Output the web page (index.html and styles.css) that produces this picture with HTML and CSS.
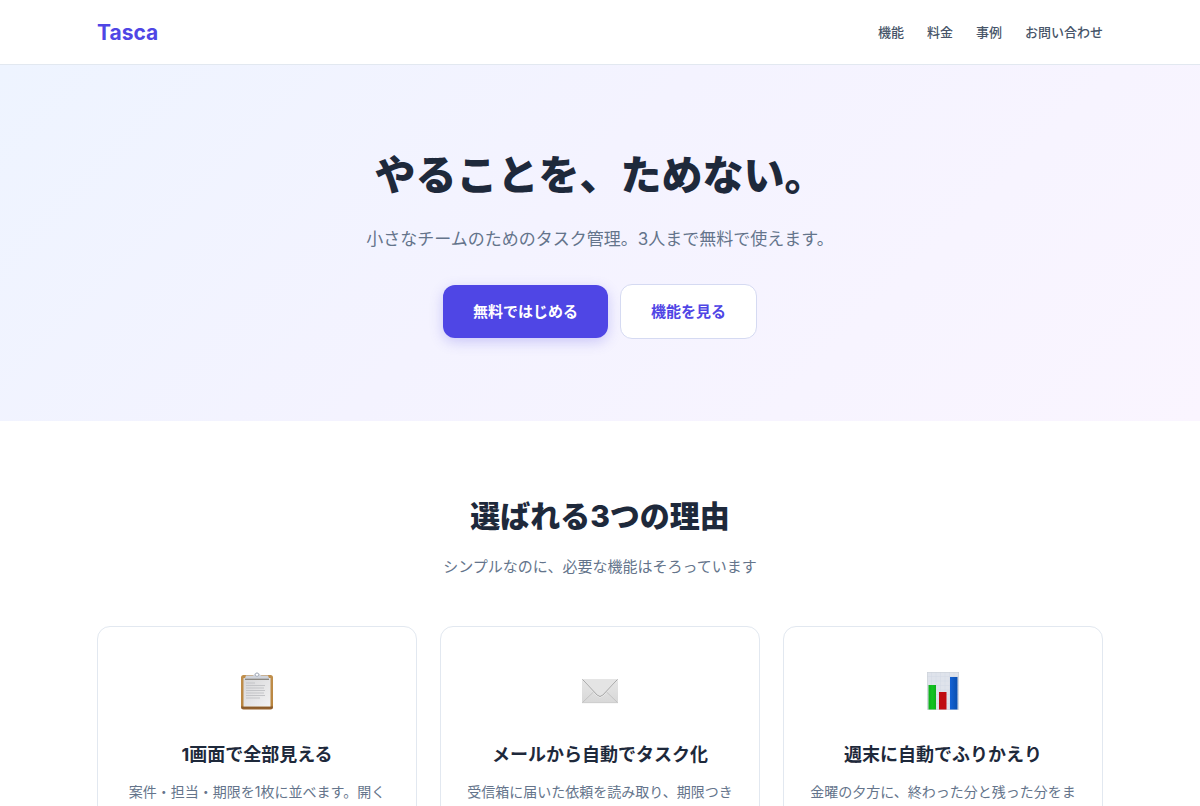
FILE: index.html
```html
<!DOCTYPE html>
<html lang="ja">
<head>
  <meta charset="UTF-8" />
  <meta name="viewport" content="width=device-width, initial-scale=1.0"/>
  <title>Tasca</title>
  <link rel="stylesheet" href="styles.css">
</head>
<body>
  <header class="header">
    <div class="container header-inner">
      <a href="#" class="logo">Tasca</a>
      <nav class="nav">
        <a href="#features">機能</a>
        <a href="#price">料金</a>
        <a href="#cases">事例</a>
        <a href="#contact">お問い合わせ</a>
      </nav>
    </div>
  </header>

  <main>
    <section class="hero">
      <div class="container">
        <h1>やることを、ためない。</h1>
        <p class="hero-lead">小さなチームのためのタスク管理。3人まで無料で使えます。</p>
        <div class="hero-buttons">
          <a href="#start" class="btn btn-primary">無料ではじめる</a>
          <a href="#features" class="btn btn-outline">機能を見る</a>
        </div>
      </div>
    </section>

    <section class="features" id="features">
      <div class="container">
        <h2>選ばれる3つの理由</h2>
        <p class="features-lead">シンプルなのに、必要な機能はそろっています</p>

        <div class="cards">
          <div class="card">
            <!-- clipboard -->
            <svg class="card-icon" viewBox="0 0 38 38" aria-hidden="true">
              <defs>
                <linearGradient id="board" x1="0" y1="0" x2="0" y2="1">
                  <stop offset="0" stop-color="#c08f4c"/>
                  <stop offset="0.88" stop-color="#b9853f"/>
                  <stop offset="0.94" stop-color="#8a5a2a"/>
                  <stop offset="1" stop-color="#9a6630"/>
                </linearGradient>
                <linearGradient id="paper" x1="0" y1="0" x2="1" y2="1">
                  <stop offset="0" stop-color="#d6d6d8"/>
                  <stop offset="1" stop-color="#f2f2f3"/>
                </linearGradient>
              </defs>
              <rect x="3" y="3" width="32" height="34.5" rx="2.5" fill="url(#board)"/>
              <rect x="5.5" y="6" width="27" height="28.5" fill="url(#paper)"/>
              <path d="M8 11h9M8 13.5h19M8 16h18M8 18.5h19M8 21h18M8 23.5h19M8 26h14" stroke="#c3c4c7" stroke-width="1"/>
              <path d="M8 3.5h6.5c1.5 0 2-3 4.5-3s3 3 4.5 3H30l1.5 4h-25z" fill="#cfd3db"/>
              <path d="M7 7.3h24" stroke="#858078" stroke-width="1.2"/>
              <circle cx="19" cy="2.7" r="1.7" fill="#fff" stroke="#a9b0bd" stroke-width="1"/>
            </svg>
            <h3>1画面で全部見える</h3>
            <p>案件・担当・期限を1枚に並べます。開く</p>
          </div>

          <div class="card">
            <!-- envelope -->
            <svg class="card-icon" viewBox="0 0 38 38" aria-hidden="true">
              <defs>
                <linearGradient id="envelope" x1="0" y1="0" x2="0" y2="1">
                  <stop offset="0" stop-color="#e6e6e6"/>
                  <stop offset="1" stop-color="#d8d8d8"/>
                </linearGradient>
              </defs>
              <rect x="1" y="7" width="36" height="24" rx="0.5" fill="url(#envelope)"/>
              <path d="M1.5 30.5l12.500-12M36.5 30.5L24 18.5" fill="none" stroke="#bdbdbd" stroke-width="0.8"/>
              <path d="M1.5 8.2L16.5 24q2.5 2.2 5 0L36.5 8.2" fill="none" stroke="#f7f7f7" stroke-width="1"/>
              <path d="M1.5 7.5L16.3 23.2q2.7 2.6 5.4 0L36.5 7.5" fill="#e4e4e4" stroke="#a3a3a3" stroke-width="1"/>
              <path d="M1 30.7h36" stroke="#c6c6c6" stroke-width="0.6"/>
            </svg>
            <h3>メールから自動でタスク化</h3>
            <p>受信箱に届いた依頼を読み取り、期限つき</p>
          </div>

          <div class="card">
            <!-- bar chart -->
            <svg class="card-icon" viewBox="0 0 38 38" aria-hidden="true">
              <defs>
                <linearGradient id="bar-green" x1="0" y1="0" x2="1" y2="0">
                  <stop offset="0" stop-color="#0fae1c"/>
                  <stop offset="0.5" stop-color="#12c420"/>
                  <stop offset="1" stop-color="#0fae1c"/>
                </linearGradient>
                <linearGradient id="bar-blue" x1="0" y1="0" x2="1" y2="0">
                  <stop offset="0" stop-color="#1463d6"/>
                  <stop offset="1" stop-color="#0b4fae"/>
                </linearGradient>
              </defs>
              <rect x="3" y="0" width="32" height="37.5" fill="#dfe3eb"/>
              <path d="M3 4.5h32M3 9h32M3 13.5h32M3 18h32M3 22.5h32M3 27h32M3 31.5h32M7.5 0v37.5M12 0v37.5M16.5 0v37.5M21 0v37.5M25.5 0v37.5M30 0v37.5" stroke="#d3d9e4" stroke-width="0.5"/>
              <rect x="3.3" y="0.3" width="31.4" height="37" fill="none" stroke="#ccd0d8" stroke-width="0.6"/>
              <rect x="4.5" y="13" width="7.5" height="24.5" fill="url(#bar-green)"/>
              <rect x="15" y="20" width="7.5" height="17.5" fill="#c00d12"/>
              <rect x="26" y="5" width="7.5" height="32.5" fill="url(#bar-blue)"/>
            </svg>
            <h3>週末に自動でふりかえり</h3>
            <p>金曜の夕方に、終わった分と残った分をま</p>
          </div>
        </div>
      </div>
    </section>
  </main>
</body>
</html>
```

FILE: styles.css
```css
* { box-sizing: border-box; }

body {
  margin: 0;
  font-family: Inter, 'Noto Sans CJK JP', sans-serif;
  color: #1e293b;
  background: #fff;
}

h1, h2, h3, p { margin: 0; }

a { text-decoration: none; }

.container {
  max-width: 1050px;
  margin: 0 auto;
  padding: 0 22px;
}

.header {
  border-bottom: 1px solid #e2e8f0;
}

.header-inner {
  display: flex;
  justify-content: space-between;
  align-items: center;
  height: 64px;
}

.logo {
  font-size: 21px;
  font-weight: 700;
  color: #4f46e5;
}

.nav {
  display: flex;
  gap: 23px;
}

.nav a {
  font-size: 13px;
  line-height: 24px;
  font-weight: 500;
  color: #475569;
}

.hero {
  padding: 75px 0 82px;
  text-align: center;
  background: linear-gradient(135deg, #eef4ff 0%, #f4f3ff 45%, #faf5ff 100%);
}

.hero h1 {
  font-size: 41px;
  line-height: 70px;
  font-weight: 900;
  margin-bottom: 14px;
}

.hero-lead {
  font-size: 17px;
  line-height: 30px;
  color: #64748b;
  margin-bottom: 30px;
}

.hero-buttons {
  display: flex;
  justify-content: center;
  align-items: center;
  gap: 12px;
}

.btn {
  padding: 14px 30px;
  border-radius: 12px;
  font-size: 15px;
  line-height: 25px;
  font-weight: 700;
}

.btn-primary {
  background: #4f46e5;
  color: #fff;
  box-shadow: 0 4px 13px rgba(79, 70, 229, 0.25);
}

.btn-outline {
  background: #fff;
  color: #4f46e5;
  border: 1px solid #d5daf2;
}

.features {
  padding: 70px 0;
  text-align: center;
}

.features h2 {
  font-size: 30px;
  line-height: 50px;
  font-weight: 800;
  margin-bottom: 14px;
}

.features-lead {
  font-size: 15px;
  line-height: 24px;
  color: #64748b;
  margin-bottom: 47px;
}

.cards {
  display: grid;
  grid-template-columns: repeat(3, 1fr);
  gap: 23px;
}

.card {
  padding: 45px 23px 32px;
  border: 1px solid #e2e8f0;
  border-radius: 13px;
  background: #fff;
}

.card-icon {
  display: block;
  width: 38px;
  height: 38px;
  margin: 0 auto 30px;
}

.card h3 {
  font-size: 18px;
  line-height: 30px;
  font-weight: 700;
  margin-bottom: 10px;
}

.card p {
  font-size: 14px;
  line-height: 24px;
  color: #64748b;
}

@media (max-width: 768px) {
  .cards { grid-template-columns: 1fr; }
  .hero h1 { font-size: 30px; }
}
```
